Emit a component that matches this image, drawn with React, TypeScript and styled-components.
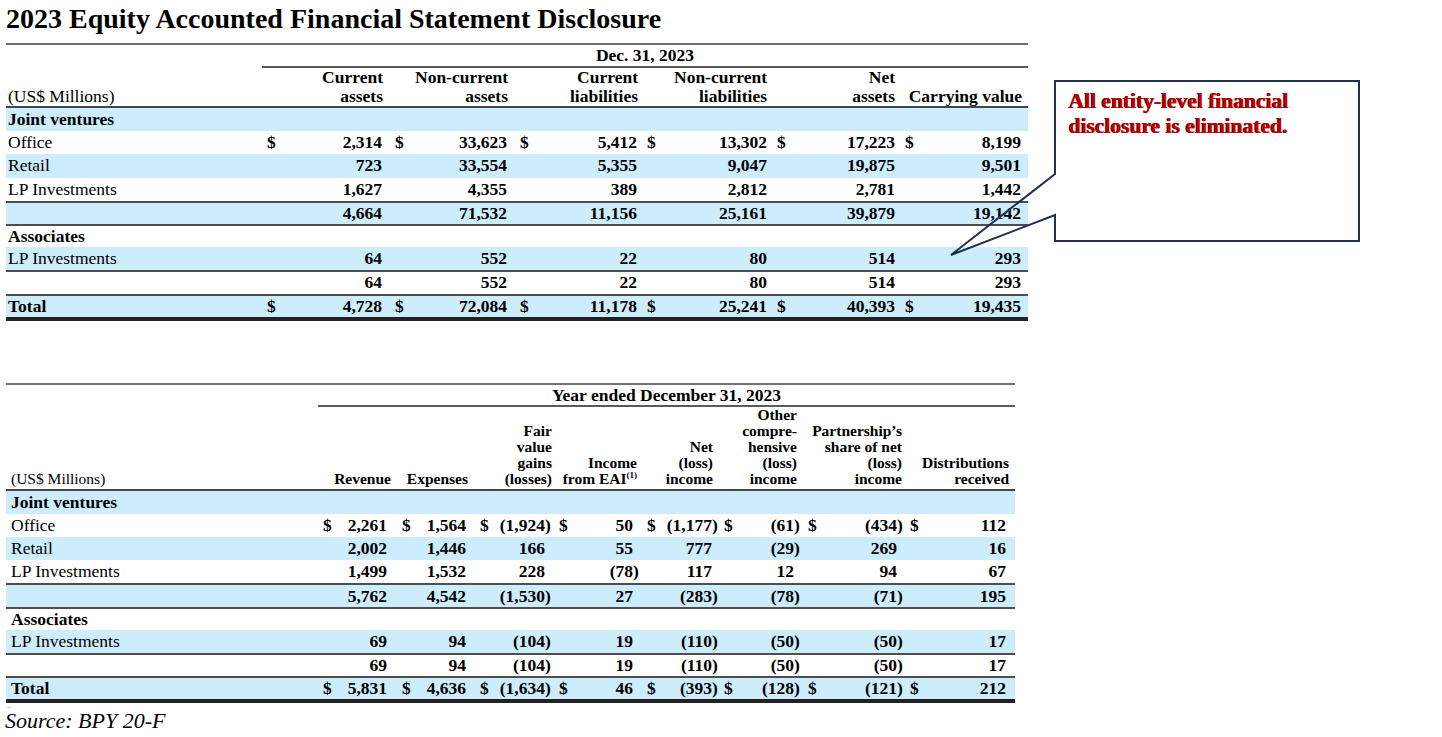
import React from "react";
import styled, { createGlobalStyle } from "styled-components";

const GlobalStyle = createGlobalStyle`
  html, body { margin: 0; padding: 0; background: #ffffff; }
  body { font-family: "Liberation Serif", "Times New Roman", serif; color: #000; }
`;

const SHADE = "#cdecfc";

const Page = styled.div`
  position: relative;
  width: 1442px;
  height: 737px;
  box-sizing: border-box;
  padding: 3px 0 0 6px;
  overflow: hidden;
  display: flex;
  flex-direction: column;
  align-items: flex-start;
`;

const Title = styled.h1`
  margin: 0 0 8px;
  font-size: 28px;
  line-height: 32px;
  font-weight: 700;
  white-space: nowrap;
`;

const Sheet = styled.section<{ $width: number; $gap: number }>`
  width: ${(p) => p.$width}px;
  margin-bottom: ${(p) => p.$gap}px;
  border-top: 2px solid #707070;
  font-size: 17.5px;
`;

const Grid = styled.div<{ $cols: string }>`
  display: grid;
  grid-template-columns: ${(p) => p.$cols};
`;

const SpanTitle = styled.div<{ $lh: number }>`
  grid-column: 2 / -1;
  text-align: center;
  font-weight: 700;
  white-space: nowrap;
  line-height: ${(p) => p.$lh}px;
  padding: 1px 0;
  border-bottom: 2px solid #5a5a5a;
`;

const HeadRow = styled(Grid)<{ $lh: number; $padB: number; $size: number }>`
  align-items: end;
  font-size: ${(p) => p.$size}px;
  line-height: ${(p) => p.$lh}px;
  border-bottom: 2px solid #454545;
  & > * {
    padding-bottom: ${(p) => p.$padB}px;
  }
`;

const UnitsCell = styled.div<{ $padL: number }>`
  padding-left: ${(p) => p.$padL}px;
  white-space: nowrap;
`;

const HeadCell = styled.div<{ $padR: number }>`
  display: flex;
  flex-direction: column;
  align-items: flex-end;
  text-align: right;
  font-weight: 700;
  white-space: nowrap;
  padding-right: ${(p) => p.$padR}px;
`;

const Note = styled.sup`
  font-size: 9px;
  line-height: 0;
  vertical-align: 6px;
`;

const DataRow = styled(Grid)<{ $shade?: boolean; $ruleTop?: boolean; $ruleBottom?: boolean }>`
  box-sizing: border-box;
  height: ${(p) => (p.$ruleBottom ? "27.2px" : "23.2px")};
  align-items: center;
  background: ${(p) => (p.$shade ? SHADE : "#ffffff")};
  border-top: ${(p) => (p.$ruleTop ? "2px solid #4e4e4e" : "none")};
  border-bottom: ${(p) => (p.$ruleBottom ? "4px solid #222" : "none")};
`;

const LabelCell = styled.div<{ $strong?: boolean; $padL: number }>`
  padding-left: ${(p) => p.$padL}px;
  font-weight: ${(p) => (p.$strong ? 700 : 400)};
  white-space: nowrap;
`;

const ValueCell = styled.div<{ $padL: number; $padR: number }>`
  display: flex;
  justify-content: space-between;
  align-items: center;
  font-weight: 700;
  white-space: nowrap;
  padding-left: ${(p) => p.$padL}px;
  padding-right: ${(p) => p.$padR}px;
`;

const Dollar = styled.span``;

const Amount = styled.span`
  display: inline-flex;
  align-items: baseline;
`;

const Paren = styled.span<{ $w: number }>`
  display: inline-block;
  width: ${(p) => p.$w}px;
  text-align: left;
`;

const CalloutLayer = styled.div`
  position: absolute;
  left: 940px;
  top: 70px;
  width: 430px;
  height: 200px;
  pointer-events: none;
`;

const CalloutShape = styled.svg`
  position: absolute;
  left: 0;
  top: 0;
`;

const CalloutText = styled.p`
  position: absolute;
  left: 129px;
  top: 19px;
  margin: 0;
  font-size: 21.5px;
  line-height: 25px;
  font-weight: 700;
  color: #c40000;
  text-shadow: -1px 0 0 #4a0000;
  white-space: nowrap;
`;

const Ditto = styled.div`
  font-size: 7px;
  line-height: 7px;
  height: 7px;
  color: #777;
  padding-left: 1px;
`;

const SourceNote = styled.div`
  font-style: italic;
  font-size: 22px;
  line-height: 22px;
  margin-left: -1px;
`;

type Row = {
  label: string;
  strong?: boolean;
  shade?: boolean;
  ruleTop?: boolean;
  ruleBottom?: boolean;
  dollars?: boolean;
  values?: string[];
};

type Layout = {
  cols: number[];
  dollarPad: number[];
  amountPad: number[];
  headPad: number[];
  slot: number;
  labelPad: number;
};

function Figure({ value, slot }: { value: string; slot: number }) {
  const neg = value.startsWith("(");
  const body = neg ? value.slice(0, -1) : value;
  return (
    <Amount>
      {body}
      {slot > 0 && <Paren $w={slot}>{neg ? ")" : ""}</Paren>}
    </Amount>
  );
}

function Table({
  layout,
  gap,
  spanTitle,
  spanLh,
  headLh,
  headPadB,
  headSize,
  headers,
  rows,
}: {
  layout: Layout;
  gap: number;
  spanTitle: string;
  spanLh: number;
  headLh: number;
  headPadB: number;
  headSize: number;
  headers: React.ReactNode[][];
  rows: Row[];
}) {
  const cols = layout.cols.map((c) => `${c}px`).join(" ");
  const width = layout.cols.reduce((a, b) => a + b, 0);
  return (
    <Sheet $width={width} $gap={gap}>
      <Grid $cols={cols}>
        <SpanTitle $lh={spanLh}>{spanTitle}</SpanTitle>
      </Grid>
      <HeadRow $cols={cols} $lh={headLh} $padB={headPadB} $size={headSize}>
        <UnitsCell $padL={layout.labelPad}>(US$ Millions)</UnitsCell>
        {headers.map((lines, i) => (
          <HeadCell key={i} $padR={layout.headPad[i]}>
            {lines.map((l, j) => (
              <span key={j}>{l}</span>
            ))}
          </HeadCell>
        ))}
      </HeadRow>
      {rows.map((r, i) => (
        <DataRow
          key={i}
          $cols={cols}
          $shade={r.shade}
          $ruleTop={r.ruleTop}
          $ruleBottom={r.ruleBottom}
        >
          <LabelCell $strong={r.strong} $padL={layout.labelPad}>
            {r.label}
          </LabelCell>
          {r.values &&
            r.values.map((v, j) => (
              <ValueCell key={j} $padL={layout.dollarPad[j]} $padR={layout.amountPad[j]}>
                <Dollar>{r.dollars ? "$" : ""}</Dollar>
                <Figure value={v} slot={layout.slot} />
              </ValueCell>
            ))}
        </DataRow>
      ))}
    </Sheet>
  );
}

const balanceLayout: Layout = {
  cols: [256, 121, 125, 130, 129, 128, 133],
  dollarPad: [5, 12, 12, 9, 10, 10],
  amountPad: [1, 1, 1, 0, 0, 7],
  headPad: [0, 0, 0, 0, 0, 6],
  slot: 0,
  labelPad: 2,
};

const incomeLayout: Layout = {
  cols: [312, 75, 79, 80, 87, 79, 82, 103, 112],
  dollarPad: [5, 9, 8, 7, 8, 6, 8, 7],
  amountPad: [0, 0, 1, 0, 0, 0, 0, 3],
  headPad: [2, 4, 0, 2, 5, 3, 1, 6],
  slot: 6,
  labelPad: 5,
};

const balanceHeaders: React.ReactNode[][] = [
  ["Current", "assets"],
  ["Non-current", "assets"],
  ["Current", "liabilities"],
  ["Non-current", "liabilities"],
  ["Net", "assets"],
  ["Carrying value"],
];

const incomeHeaders: React.ReactNode[][] = [
  ["Revenue"],
  ["Expenses"],
  ["Fair", "value", "gains", "(losses)"],
  [
    "Income",
    <>
      from EAI<Note>(1)</Note>
    </>,
  ],
  ["Net", "(loss)", "income"],
  ["Other", "compre-", "hensive", "(loss)", "income"],
  ["Partnership’s", "share of net", "(loss)", "income"],
  ["Distributions", "received"],
];

const balanceRows: Row[] = [
  { label: "Joint ventures", strong: true, shade: true },
  { label: "Office", dollars: true, values: ["2,314", "33,623", "5,412", "13,302", "17,223", "8,199"] },
  { label: "Retail", shade: true, values: ["723", "33,554", "5,355", "9,047", "19,875", "9,501"] },
  { label: "LP Investments", values: ["1,627", "4,355", "389", "2,812", "2,781", "1,442"] },
  { label: "", shade: true, ruleTop: true, values: ["4,664", "71,532", "11,156", "25,161", "39,879", "19,142"] },
  { label: "Associates", strong: true, ruleTop: true },
  { label: "LP Investments", shade: true, values: ["64", "552", "22", "80", "514", "293"] },
  { label: "", ruleTop: true, values: ["64", "552", "22", "80", "514", "293"] },
  {
    label: "Total",
    strong: true,
    shade: true,
    ruleTop: true,
    ruleBottom: true,
    dollars: true,
    values: ["4,728", "72,084", "11,178", "25,241", "40,393", "19,435"],
  },
];

const incomeRows: Row[] = [
  { label: "Joint ventures", strong: true, shade: true },
  {
    label: "Office",
    dollars: true,
    values: ["2,261", "1,564", "(1,924)", "50", "(1,177)", "(61)", "(434)", "112"],
  },
  { label: "Retail", shade: true, values: ["2,002", "1,446", "166", "55", "777", "(29)", "269", "16"] },
  { label: "LP Investments", values: ["1,499", "1,532", "228", "(78)", "117", "12", "94", "67"] },
  {
    label: "",
    shade: true,
    ruleTop: true,
    values: ["5,762", "4,542", "(1,530)", "27", "(283)", "(78)", "(71)", "195"],
  },
  { label: "Associates", strong: true, ruleTop: true },
  { label: "LP Investments", shade: true, values: ["69", "94", "(104)", "19", "(110)", "(50)", "(50)", "17"] },
  { label: "", ruleTop: true, values: ["69", "94", "(104)", "19", "(110)", "(50)", "(50)", "17"] },
  {
    label: "Total",
    strong: true,
    shade: true,
    ruleTop: true,
    ruleBottom: true,
    dollars: true,
    values: ["5,831", "4,636", "(1,634)", "46", "(393)", "(128)", "(121)", "212"],
  },
];

export default function App() {
  return (
    <>
      <GlobalStyle />
      <Page>
        <Title>2023 Equity Accounted Financial Statement Disclosure</Title>
        <Table
          layout={balanceLayout}
          gap={62}
          spanTitle="Dec. 31, 2023"
          spanLh={19}
          headLh={19}
          headPadB={0}
          headSize={17.5}
          headers={balanceHeaders}
          rows={balanceRows}
        />
        <Table
          layout={incomeLayout}
          gap={0}
          spanTitle="Year ended December 31, 2023"
          spanLh={18}
          headLh={16}
          headPadB={2}
          headSize={15.5}
          headers={incomeHeaders}
          rows={incomeRows}
        />
        <Ditto>..</Ditto>
        <SourceNote>Source: BPY 20-F</SourceNote>
        <CalloutLayer>
          <CalloutShape width="430" height="200" viewBox="0 0 430 200">
            <path
              d="M115 11 H419 V171 H115 V145 L11 185 L115 104 Z"
              fill="none"
              stroke="#1f3153"
              strokeWidth="2"
              strokeLinejoin="miter"
            />
          </CalloutShape>
          <CalloutText>
            All entity-level financial
            <br />
            disclosure is eliminated.
          </CalloutText>
        </CalloutLayer>
      </Page>
    </>
  );
}
